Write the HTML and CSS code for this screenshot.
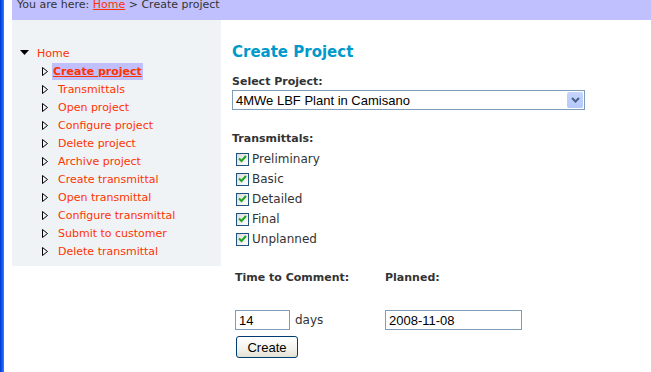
FILE: index.html
```html
<!DOCTYPE html>
<html lang="en">
<head>
    <meta charset="UTF-8">
    <title>Create Project</title>
    <link rel="stylesheet" href="styles.css">
</head>
<body>
    <div class="frame-edge"></div>
    <div class="page">
        <div class="crumbs">
            <div class="crumbs-text">You are here: <a href="#">Home</a> &gt; Create project</div>
        </div>
        <div class="columns">
            <div class="sidebar">
                <ul class="menu">
                    <li class="menu-root">
                        <svg class="arrow-down" width="9" height="6" viewBox="0 0 9 6"><polygon points="0,0 9,0 4.5,5" fill="#000"/></svg>
                        <a href="#">Home</a>
                    </li>
                    <li class="active">
                        <svg class="arrow-right" width="6" height="9" viewBox="0 0 6 9"><polygon points="0.5,0.5 5.5,4.5 0.5,8.5" fill="none" stroke="#000"/></svg>
                        <a href="#">Create project</a>
                    </li>
                    <li><svg class="arrow-right" width="6" height="9" viewBox="0 0 6 9"><polygon points="0.5,0.5 5.5,4.5 0.5,8.5" fill="none" stroke="#000"/></svg><a href="#">Transmittals</a></li>
                    <li><svg class="arrow-right" width="6" height="9" viewBox="0 0 6 9"><polygon points="0.5,0.5 5.5,4.5 0.5,8.5" fill="none" stroke="#000"/></svg><a href="#">Open project</a></li>
                    <li><svg class="arrow-right" width="6" height="9" viewBox="0 0 6 9"><polygon points="0.5,0.5 5.5,4.5 0.5,8.5" fill="none" stroke="#000"/></svg><a href="#">Configure project</a></li>
                    <li><svg class="arrow-right" width="6" height="9" viewBox="0 0 6 9"><polygon points="0.5,0.5 5.5,4.5 0.5,8.5" fill="none" stroke="#000"/></svg><a href="#">Delete project</a></li>
                    <li><svg class="arrow-right" width="6" height="9" viewBox="0 0 6 9"><polygon points="0.5,0.5 5.5,4.5 0.5,8.5" fill="none" stroke="#000"/></svg><a href="#">Archive project</a></li>
                    <li><svg class="arrow-right" width="6" height="9" viewBox="0 0 6 9"><polygon points="0.5,0.5 5.5,4.5 0.5,8.5" fill="none" stroke="#000"/></svg><a href="#">Create transmittal</a></li>
                    <li><svg class="arrow-right" width="6" height="9" viewBox="0 0 6 9"><polygon points="0.5,0.5 5.5,4.5 0.5,8.5" fill="none" stroke="#000"/></svg><a href="#">Open transmittal</a></li>
                    <li><svg class="arrow-right" width="6" height="9" viewBox="0 0 6 9"><polygon points="0.5,0.5 5.5,4.5 0.5,8.5" fill="none" stroke="#000"/></svg><a href="#">Configure transmittal</a></li>
                    <li><svg class="arrow-right" width="6" height="9" viewBox="0 0 6 9"><polygon points="0.5,0.5 5.5,4.5 0.5,8.5" fill="none" stroke="#000"/></svg><a href="#">Submit to customer</a></li>
                    <li><svg class="arrow-right" width="6" height="9" viewBox="0 0 6 9"><polygon points="0.5,0.5 5.5,4.5 0.5,8.5" fill="none" stroke="#000"/></svg><a href="#">Delete transmittal</a></li>
                </ul>
            </div>

            <div class="main">
                <h1>Create Project</h1>

                <div class="field-label">Select Project:</div>
                <div class="select-box">
                    <span class="select-text">4MWe LBF Plant in Camisano</span>
                    <span class="select-button">
                        <svg width="9" height="6" viewBox="0 0 9 6"><polyline points="1,1 4.5,4.5 8,1" fill="none" stroke="#4d6185" stroke-width="2"/></svg>
                    </span>
                </div>

                <div class="field-label transmittals-label">Transmittals:</div>
                <ul class="checks">
                    <li><span class="check"><svg width="9" height="8" viewBox="0 0 9 8"><polyline points="1,3.5 3.5,6 8,1" fill="none" stroke="#21a121" stroke-width="2"/></svg></span>Preliminary</li>
                    <li><span class="check"><svg width="9" height="8" viewBox="0 0 9 8"><polyline points="1,3.5 3.5,6 8,1" fill="none" stroke="#21a121" stroke-width="2"/></svg></span>Basic</li>
                    <li><span class="check"><svg width="9" height="8" viewBox="0 0 9 8"><polyline points="1,3.5 3.5,6 8,1" fill="none" stroke="#21a121" stroke-width="2"/></svg></span>Detailed</li>
                    <li><span class="check"><svg width="9" height="8" viewBox="0 0 9 8"><polyline points="1,3.5 3.5,6 8,1" fill="none" stroke="#21a121" stroke-width="2"/></svg></span>Final</li>
                    <li><span class="check"><svg width="9" height="8" viewBox="0 0 9 8"><polyline points="1,3.5 3.5,6 8,1" fill="none" stroke="#21a121" stroke-width="2"/></svg></span>Unplanned</li>
                </ul>

                <div class="dates">
                    <div class="field-label">Time to Comment:</div>
                    <div class="field-label">Planned:</div>
                    <div class="days-cell">
                        <input type="text" class="days-input" value="14">
                        <span class="unit">days</span>
                    </div>
                    <div>
                        <input type="text" class="date-input" value="2008-11-08">
                    </div>
                </div>
                <button type="button" class="create-button">Create</button>
            </div>
        </div>
    </div>
</body>
</html>
```

FILE: styles.css
```css
body {
    margin: 0;
    display: flex;
    height: 372px;
    overflow: hidden;
    background-color: #fff;
    font-family: "DejaVu Sans", Verdana, sans-serif;
    font-size: 11px;
    color: #333;
}

.frame-edge {
    width: 4px;
    flex-shrink: 0;
    background: linear-gradient(to right, #0035c8, #0a56f2 40%, #1c63f8 75%, #5b8cf0);
}

.page {
    flex: 1;
    margin-left: 8px;
}

.crumbs {
    height: 20px;
    background-color: #c0c0ff;
    overflow: hidden;
}

.crumbs-text {
    margin-top: -2px;
    padding-left: 5px;
    line-height: 13px;
    color: #333;
}

.crumbs-text a {
    color: #ff3300;
}

.columns {
    display: flex;
    align-items: flex-start;
}

.sidebar {
    width: 209px;
    background-color: #eff3f6;
    padding: 24px 0 6px;
}

.menu {
    list-style: none;
    margin: 0;
    padding: 0;
}

.menu li {
    display: flex;
    align-items: center;
    height: 18px;
    padding-left: 30px;
}

.menu a {
    color: #ff3300;
    text-decoration: none;
    margin-left: 10px;
}

.menu .menu-root {
    padding-left: 8px;
}

.menu .menu-root a {
    margin-left: 8px;
}

.menu li.active a {
    margin-left: 4px;
    padding: 0 1px;
    line-height: 17px;
    font-weight: bold;
    text-decoration: underline;
    background-color: #c0c0ff;
}

.main {
    padding: 22px 0 0 11px;
}

h1 {
    margin: 0;
    font-size: 15px;
    line-height: 20px;
    color: #0099cc;
}

.field-label {
    font-weight: bold;
    line-height: 14px;
    color: #333;
}

.main > .field-label {
    margin-top: 13px;
    margin-bottom: 1px;
}

.main > .transmittals-label {
    margin-top: 22px;
    margin-bottom: 3px;
}

.select-box {
    display: flex;
    align-items: center;
    justify-content: space-between;
    width: 351px;
    height: 18px;
    border: 1px solid #7f9db9;
    background-color: #fff;
}

.select-text {
    padding-left: 3px;
    font-family: "Liberation Sans", Arial, sans-serif;
    font-size: 13px;
    color: #000;
}

.select-button {
    display: flex;
    align-items: center;
    justify-content: center;
    width: 16px;
    height: 16px;
    margin-right: 1px;
    border-radius: 2px;
    background: linear-gradient(#c6d5fd, #b4c8fb);
}

.checks {
    list-style: none;
    margin: 0;
    padding: 0 0 0 4px;
}

.checks li {
    display: flex;
    align-items: center;
    gap: 3px;
    height: 20px;
    font-size: 12px;
    color: #333;
}

.check {
    display: flex;
    align-items: center;
    justify-content: center;
    width: 11px;
    height: 11px;
    border: 1px solid #1c5180;
    background: linear-gradient(135deg, #dcdcd7, #fff);
}

.dates {
    display: grid;
    grid-template-columns: 150px 160px;
    grid-template-rows: 14px 20px;
    row-gap: 25px;
    margin-top: 22px;
    padding-left: 3px;
}

.days-cell {
    display: flex;
    align-items: center;
    gap: 5px;
}

.unit {
    font-size: 12px;
    color: #333;
}

input[type="text"] {
    height: 20px;
    box-sizing: border-box;
    margin: 0;
    padding: 0 3px;
    border: 1px solid #7f9db9;
    font-family: "Liberation Sans", Arial, sans-serif;
    font-size: 13px;
    color: #000;
}

.days-input {
    width: 55px;
}

.date-input {
    width: 137px;
}

.create-button {
    margin: 6px 0 0 4px;
    width: 62px;
    height: 22px;
    padding: 0;
    border: 1px solid #003c74;
    border-radius: 3px;
    background: linear-gradient(#ffffff, #f3f2ec 60%, #e3e1d4);
    font-family: "Liberation Sans", Arial, sans-serif;
    font-size: 13px;
    color: #000;
}
```
